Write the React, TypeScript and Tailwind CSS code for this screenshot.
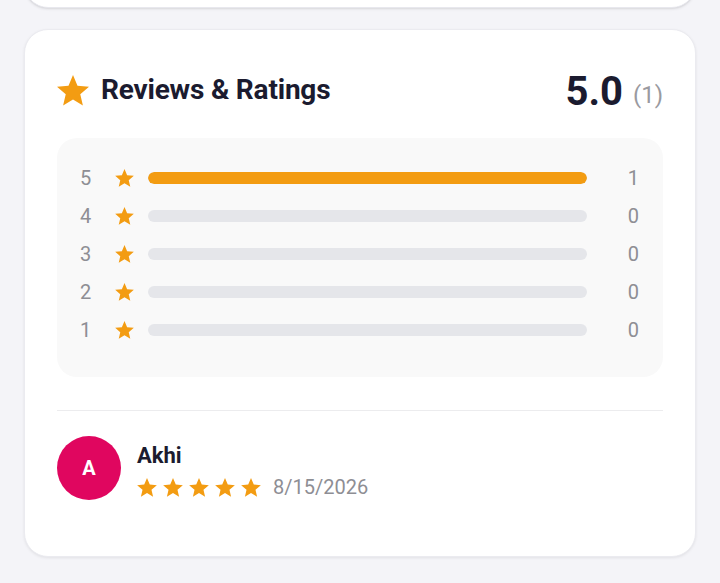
import React from 'react';

const StarIcon: React.FC<{ className?: string }> = ({ className }) => (
  <svg viewBox="2 2 20 19.27" className={className} fill="currentColor">
    <path d="M12 17.27L18.18 21l-1.64-7.03L22 9.24l-7.19-.61L12 2 9.19 8.63 2 9.24l5.46 4.73L5.82 21z" />
  </svg>
);

const distribution = [
  { stars: 5, count: 1 },
  { stars: 4, count: 0 },
  { stars: 3, count: 0 },
  { stars: 2, count: 0 },
  { stars: 1, count: 0 },
];

const App: React.FC = () => {
  const total = distribution.reduce((s, d) => s + d.count, 0);

  return (
    <div
      className="min-h-[583px] bg-[#f4f4f8] px-6 pb-8 overflow-hidden"
      style={{ fontFamily: 'Roboto, "Noto Sans", sans-serif' }}
    >
      {/* previous card, mostly scrolled out of view */}
      <div className="-mt-[40px] h-[48px] bg-white rounded-b-[24px] border border-[#e8e8ee] shadow-sm" />

      <div className="mt-[21px] bg-white rounded-[24px] border border-[#ebebf0] shadow-[0_1px_3px_rgba(0,0,0,0.08)] px-8 pt-[37px] pb-[56px]">
        {/* header */}
        <div className="flex items-center justify-between h-[46px]">
          <div className="flex items-center gap-3">
            <StarIcon className="w-8 h-[31px] text-[#f39c12]" />
            <h2 className="text-[28px] font-bold text-[#1b1b2f] tracking-[-0.2px]">Reviews &amp; Ratings</h2>
          </div>
          <div className="flex items-baseline gap-[10px]">
            <span className="text-[40px] leading-none font-bold text-[#1b1b2f] translate-y-[2px]">5.0</span>
            <span className="text-[24px] leading-none text-[#9a9aa0]">(1)</span>
          </div>
        </div>

        {/* distribution */}
        <div className="mt-[25px] bg-[#f9f9f9] rounded-[20px] pl-6 pr-6 pt-6 pb-[31px] flex flex-col gap-[6px]">
          {distribution.map((d) => (
            <div key={d.stars} className="flex items-center h-8">
              <span className="w-[35px] -ml-[1px] text-[20px] text-[#8e8e94]">{d.stars}</span>
              <StarIcon className="w-[19px] h-[18px] text-[#f39c12]" />
              <div className="flex-1 ml-[14px] h-3 rounded-full bg-[#e5e6ea] overflow-hidden">
                <div
                  className="h-full rounded-full bg-[#f39c12]"
                  style={{ width: `${total ? (d.count / total) * 100 : 0}%` }}
                />
              </div>
              <span className="w-[52px] text-right text-[20px] text-[#8e8e94]">{d.count}</span>
            </div>
          ))}
        </div>

        <div className="mt-[33px] h-px bg-[#ececee]" />

        {/* review */}
        <div className="pt-[25px] flex items-start gap-4 h-[89px]">
          <div className="w-16 h-16 rounded-full bg-[#e0065f] flex items-center justify-center">
            <span className="text-white text-[20px] font-bold">A</span>
          </div>
          <div className="flex flex-col mt-[6px]">
            <span className="text-[22px] leading-[28px] font-bold text-[#1b1b2f]">Akhi</span>
            <div className="flex items-center mt-[2px]">
              <div className="flex gap-[6px]">
                {[0, 1, 2, 3, 4].map((i) => (
                  <StarIcon key={i} className="w-5 h-[19px] text-[#f39c12]" />
                ))}
              </div>
              <span className="ml-3 text-[20px] text-[#8e8e94]">8/15/2026</span>
            </div>
          </div>
        </div>
      </div>
    </div>
  );
};

export default App;
